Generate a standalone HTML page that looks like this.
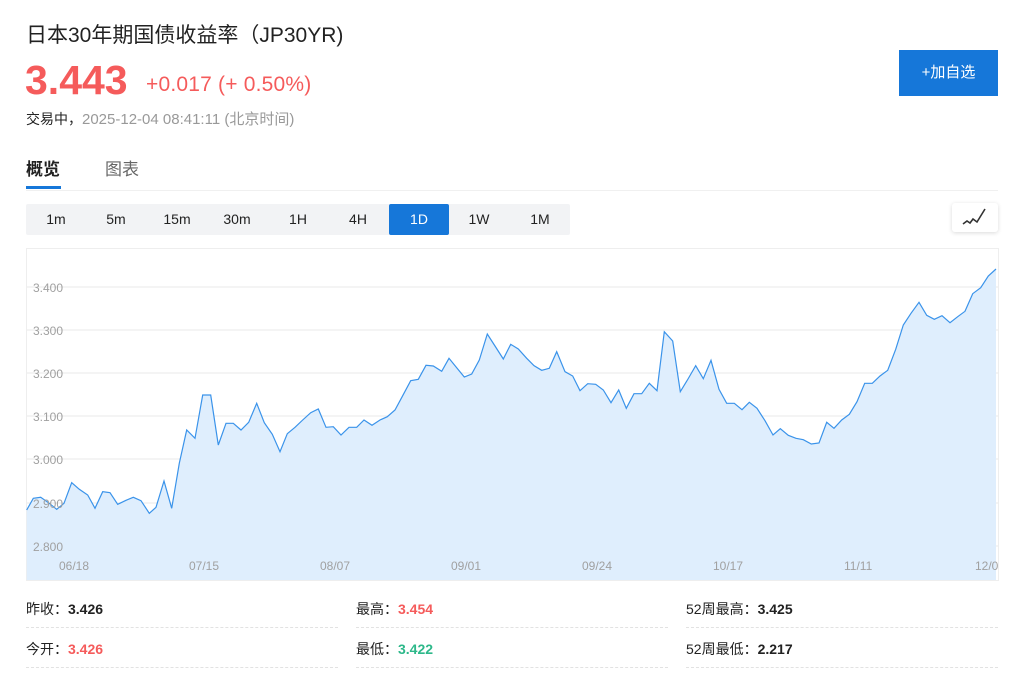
<!DOCTYPE html>
<html><head><meta charset="utf-8">
<style>
*{margin:0;padding:0;box-sizing:border-box}
body{width:1015px;height:690px;background:#fff;font-family:"Liberation Sans","Noto Sans CJK SC",sans-serif;position:relative;overflow:hidden;color:#222}
.a{position:absolute;white-space:nowrap}
.tf{position:absolute;top:204px;left:26px;width:544px;height:31px;background:#f2f3f5;border-radius:2px}
.tf span{position:absolute;top:0;width:60px;height:31px;line-height:31px;text-align:center;font-size:14px;color:#222}
.tf span.on{background:#1677d9;color:#fff;border-radius:2px}
.row{position:absolute;font-size:14px;color:#222}
.row b{font-weight:bold}
.dl{position:absolute;height:0;border-top:1px dashed #e2e2e2;width:312px}
</style></head><body>
<div class="a" style="left:26px;top:19px;font-size:21px;color:#222">日本30年期国债收益率（JP30YR)</div>
<div class="a" style="left:25px;top:57px;font-size:41px;font-weight:bold;color:#f55b5b">3.443</div>
<div class="a" style="left:146px;top:73px;font-size:21px;color:#f55b5b;letter-spacing:0.2px">+0.017 (+ 0.50%)</div>
<div class="a" style="left:26px;top:108px;font-size:14px;color:#222;font-weight:normal">交易中，<span style="color:#999;font-size:15px">2025-12-04 08:41:11 (北京时间)</span></div>
<div class="a" style="left:899px;top:50px;width:99px;height:46px;background:#1677d9;color:#fff;font-size:15px;line-height:46px;text-align:center">+加自选</div>
<div class="a" style="left:26px;top:155px;font-size:17px;font-weight:bold;color:#222">概览</div>
<div class="a" style="left:105px;top:155px;font-size:17px;color:#666">图表</div>
<div class="a" style="left:26px;top:186px;width:35px;height:3px;background:#1677d9"></div>
<div class="a" style="left:26px;top:190px;width:972px;height:1px;background:#f0f0f0"></div>
<div class="tf"><span style="left:0">1m</span><span style="left:60px">5m</span><span style="left:121px">15m</span><span style="left:181px">30m</span><span style="left:242px">1H</span><span style="left:302px">4H</span><span class="on" style="left:363px">1D</span><span style="left:423px">1W</span><span style="left:484px">1M</span></div>
<div class="a" style="left:952px;top:203px;width:46px;height:29px;background:#fff;border-radius:3px;box-shadow:0 1px 4px rgba(0,0,0,.15)">
<svg width="46" height="29"><polyline points="11,21 15,18 18,20 21,16 25,19 33,6" fill="none" stroke="#333" stroke-width="1.6"/></svg></div>
<svg class="a" style="left:0;top:0" width="1015" height="690">
<rect x="26.5" y="248.5" width="972" height="332" fill="none" stroke="#eee"/>
<g stroke="#f0f0f0" stroke-width="1.5">
<line x1="27" x2="998" y1="287" y2="287"/><line x1="27" x2="998" y1="330" y2="330"/><line x1="27" x2="998" y1="373" y2="373"/><line x1="27" x2="998" y1="416" y2="416"/><line x1="27" x2="998" y1="459" y2="459"/><line x1="27" x2="998" y1="503" y2="503"/><line x1="27" x2="998" y1="546" y2="546"/>
</g>
<polygon fill="#dfeefd" points="26.7,510 33.3,498.3 40.7,497.3 49.3,503.3 56.7,509.3 64,503.3 71.7,482.7 79.3,489.3 87.7,495 95,508.3 102.7,491.7 110,492.7 117.7,504.3 126,500.3 133.3,497.3 141,500.7 149.3,513.3 156,507.3 164,481 171.7,508.3 179.3,463.3 186.7,430 195,438.3 202.7,395 210.7,395 218.3,445 226,423.3 233.3,423.3 241,430 248.7,422.3 256.7,403.3 264.3,422.7 272.3,434.3 280,451.7 287.3,433.7 295,427.3 302.7,420 310.7,412.7 318.3,409 326,427.3 333.3,426.7 341,435 349,427.3 356.7,427.3 364,420 372,425.3 380,420 387.3,416.7 395,410 402.7,395.7 410.7,380.7 418.3,379.3 426,365.3 433.3,366 441.7,371.3 449,358.3 456.7,367.7 464.3,377 471.7,374 479.3,360 487.3,334 495,346 503.3,359 510.7,344.3 518.3,349 526.7,358.3 534,365.7 541.7,370.3 549.3,368.3 556.7,351.7 565,371.7 572.7,376 580,390.7 587.7,383.7 595.7,384.3 603.3,390 611,402.7 618.7,390 626.3,408.3 634,393.7 641.7,393.7 649.3,383.3 657,390.7 664.3,331.7 672.7,341 680.3,391.7 688,379 695.7,365.7 703.3,378.7 711,360.3 719,389.3 726.7,403.3 734.3,403.3 742,409.7 749.3,402.3 757,408.3 765,420.7 773,435 780.3,428.7 788.3,435.3 796,438.3 803.3,439.7 811.3,444 819,443 826.7,422.3 834,428.3 841.7,420 849.3,414.3 857,401.7 864.7,383.3 872.3,383.3 880,376 887.7,370.3 895.7,349.3 903.3,325 911,313.3 919,302.3 926.7,315.3 934.3,319.3 942,315.7 950,322.7 957.7,316.7 965,311.3 972.7,293.7 980.7,287.7 988.3,276 996,269 996,580 26.7,580"/>
<polyline fill="none" stroke="#3a93ea" stroke-width="1.2" points="26.7,510 33.3,498.3 40.7,497.3 49.3,503.3 56.7,509.3 64,503.3 71.7,482.7 79.3,489.3 87.7,495 95,508.3 102.7,491.7 110,492.7 117.7,504.3 126,500.3 133.3,497.3 141,500.7 149.3,513.3 156,507.3 164,481 171.7,508.3 179.3,463.3 186.7,430 195,438.3 202.7,395 210.7,395 218.3,445 226,423.3 233.3,423.3 241,430 248.7,422.3 256.7,403.3 264.3,422.7 272.3,434.3 280,451.7 287.3,433.7 295,427.3 302.7,420 310.7,412.7 318.3,409 326,427.3 333.3,426.7 341,435 349,427.3 356.7,427.3 364,420 372,425.3 380,420 387.3,416.7 395,410 402.7,395.7 410.7,380.7 418.3,379.3 426,365.3 433.3,366 441.7,371.3 449,358.3 456.7,367.7 464.3,377 471.7,374 479.3,360 487.3,334 495,346 503.3,359 510.7,344.3 518.3,349 526.7,358.3 534,365.7 541.7,370.3 549.3,368.3 556.7,351.7 565,371.7 572.7,376 580,390.7 587.7,383.7 595.7,384.3 603.3,390 611,402.7 618.7,390 626.3,408.3 634,393.7 641.7,393.7 649.3,383.3 657,390.7 664.3,331.7 672.7,341 680.3,391.7 688,379 695.7,365.7 703.3,378.7 711,360.3 719,389.3 726.7,403.3 734.3,403.3 742,409.7 749.3,402.3 757,408.3 765,420.7 773,435 780.3,428.7 788.3,435.3 796,438.3 803.3,439.7 811.3,444 819,443 826.7,422.3 834,428.3 841.7,420 849.3,414.3 857,401.7 864.7,383.3 872.3,383.3 880,376 887.7,370.3 895.7,349.3 903.3,325 911,313.3 919,302.3 926.7,315.3 934.3,319.3 942,315.7 950,322.7 957.7,316.7 965,311.3 972.7,293.7 980.7,287.7 988.3,276 996,269"/>
<g font-family="Liberation Sans,sans-serif" font-size="12" fill="#a0a0a0">
<text x="33" y="292">3.400</text><text x="33" y="335">3.300</text><text x="33" y="378">3.200</text><text x="33" y="421">3.100</text><text x="33" y="464">3.000</text><text x="33" y="508">2.900</text><text x="33" y="551">2.800</text>
<text x="59" y="570">06/18</text><text x="189" y="570">07/15</text><text x="320" y="570">08/07</text><text x="451" y="570">09/01</text><text x="582" y="570">09/24</text><text x="713" y="570">10/17</text><text x="844" y="570">11/11</text><text x="975" y="570">12/0</text>
</g>
</svg>
<div class="row" style="left:26px;top:599px">昨收：<b>3.426</b></div>
<div class="row" style="left:356px;top:599px">最高：<b style="color:#f55b5b">3.454</b></div>
<div class="row" style="left:686px;top:599px">52周最高：<b>3.425</b></div>
<div class="row" style="left:26px;top:639px">今开：<b style="color:#f55b5b">3.426</b></div>
<div class="row" style="left:356px;top:639px">最低：<b style="color:#2db88a">3.422</b></div>
<div class="row" style="left:686px;top:639px">52周最低：<b>2.217</b></div>
<div class="dl" style="left:26px;top:627px"></div><div class="dl" style="left:356px;top:627px"></div><div class="dl" style="left:686px;top:627px"></div>
<div class="dl" style="left:26px;top:667px"></div><div class="dl" style="left:356px;top:667px"></div><div class="dl" style="left:686px;top:667px"></div>
</body></html>
